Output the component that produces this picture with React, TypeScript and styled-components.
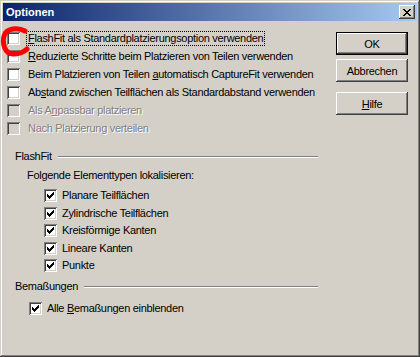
import React from 'react'
import styled, { createGlobalStyle } from 'styled-components'

const GlobalStyle = createGlobalStyle`
  body {
    margin: 0;
    background: #d4d0c8;
    font-family: "Liberation Sans", Arial, sans-serif;
  }
`

const Window = styled.div`
  position: relative;
  width: 420px;
  height: 357px;
  box-sizing: border-box;
  padding: 3px;
  background: #d4d0c8;
  box-shadow: inset -1px -1px #404040, inset 1px 1px #d4d0c8,
    inset -2px -2px #808080, inset 2px 2px #ffffff;
  display: flex;
  flex-direction: column;
  font-size: 11px;
  letter-spacing: -0.3px;
  color: #000;
`

const TitleBar = styled.div`
  height: 18px;
  flex: none;
  display: flex;
  align-items: center;
  justify-content: space-between;
  padding: 0 2px 0 3px;
  background: linear-gradient(to right, #0a246a, #a6caf0);
`

const Title = styled.span`
  color: #fff;
  font-weight: bold;
  font-size: 11px;
  letter-spacing: 0;
`

const CloseButton = styled.div`
  width: 16px;
  height: 14px;
  box-sizing: border-box;
  background: #d4d0c8;
  box-shadow: inset -1px -1px #404040, inset 1px 1px #ffffff,
    inset -2px -2px #808080;
  display: flex;
  align-items: center;
  justify-content: center;
`

const Body = styled.div`
  flex: 1;
  display: grid;
  grid-template-columns: 311px 72px;
  column-gap: 18px;
  align-items: start;
  padding: 8px 9px 0 4px;
`

const Options = styled.div`
  display: flex;
  flex-direction: column;
`

const Row = styled.div<{ $indent?: number; $top?: number; $h?: number }>`
  display: flex;
  align-items: center;
  height: ${(p) => p.$h ?? 18}px;
  margin-left: ${(p) => p.$indent ?? 0}px;
  margin-top: ${(p) => p.$top ?? 0}px;
  white-space: nowrap;
`

const Box = styled.span<{ $disabled?: boolean }>`
  flex: none;
  width: 13px;
  height: 13px;
  display: block;
  background: ${(p) => (p.$disabled ? '#d4d0c8' : '#ffffff')};
  box-shadow: inset 1px 1px #808080, inset -1px -1px #ffffff,
    inset 2px 2px #404040, inset -2px -2px #d4d0c8;

  svg {
    display: block;
  }
`

const Label = styled.span<{ $gap?: number; $focus?: boolean; $disabled?: boolean }>`
  margin-left: ${(p) => p.$gap ?? 6}px;
  padding: 0 1px;
  line-height: 13px;
  border: 1px dotted ${(p) => (p.$focus ? '#000' : 'transparent')};
  color: ${(p) => (p.$disabled ? '#808080' : '#000')};
  text-shadow: ${(p) => (p.$disabled ? '1px 1px 0 #ffffff' : 'none')};

  u {
    text-underline-offset: 1px;
  }
`

const Heading = styled.div<{ $top: number }>`
  display: flex;
  align-items: center;
  height: 14px;
  margin-top: ${(p) => p.$top}px;
  padding-left: 8px;
  gap: 6px;
`

const Etched = styled.div`
  flex: 1;
  height: 0;
  border-top: 1px solid #808080;
  border-bottom: 1px solid #ffffff;
  margin-top: 1px;
`

const Text = styled.span`
  line-height: 13px;
`

const Buttons = styled.div`
  display: flex;
  flex-direction: column;
  margin-top: 3px;
`

const Button = styled.div<{ $default?: boolean; $top?: number }>`
  width: 72px;
  height: 23px;
  box-sizing: border-box;
  margin-top: ${(p) => p.$top ?? 0}px;
  border: ${(p) => (p.$default ? '1px solid #000' : 'none')};
  box-shadow: inset -1px -1px #404040, inset 1px 1px #ffffff,
    inset -2px -2px #808080;
  display: flex;
  align-items: center;
  justify-content: center;
  background: #d4d0c8;

  u {
    text-underline-offset: 1px;
  }
`

const Annotation = styled.svg`
  position: absolute;
  left: 0;
  top: 0;
  pointer-events: none;
`

const checkPath =
  'M3 5H4V6H5V7H6V6H7V5H8V4H9V3H10V6H9V7H8V8H7V9H6V10H5V9H4V8H3Z'

function Check({ checked, disabled }: { checked?: boolean; disabled?: boolean }) {
  return (
    <Box $disabled={disabled}>
      {checked && (
        <svg width="13" height="13" shapeRendering="crispEdges">
          <path d={checkPath} fill="#000" />
        </svg>
      )}
    </Box>
  )
}

const xPixels = ['11000011', '01100110', '00111100', '00011000', '00111100', '01100110', '11000011']

function CloseIcon() {
  return (
    <svg width="8" height="7" shapeRendering="crispEdges">
      {xPixels.map((row, y) =>
        row.split('').map((c, x) => (c === '1' ? <rect key={`${x}-${y}`} x={x} y={y} width="1" height="1" fill="#000" /> : null))
      )}
    </svg>
  )
}

const flashItems = ['Planare Teilflächen', 'Zylindrische Teilflächen', 'Kreisförmige Kanten', 'Lineare Kanten', 'Punkte']

export default function App() {
  return (
    <>
      <GlobalStyle />
      <Window>
        <TitleBar>
          <Title>Optionen</Title>
          <CloseButton>
            <CloseIcon />
          </CloseButton>
        </TitleBar>
        <Body>
          <Options>
            <Row>
              <Check />
              <Label $focus>
                <u>F</u>lashFit als Standardplatzierungsoption verwenden
              </Label>
            </Row>
            <Row>
              <Check />
              <Label>
                <u>R</u>eduzierte Schritte beim Platzieren von Teilen verwenden
              </Label>
            </Row>
            <Row>
              <Check />
              <Label>
                Beim Platzieren von Teilen <u>a</u>utomatisch CaptureFit verwenden
              </Label>
            </Row>
            <Row>
              <Check />
              <Label>
                Ab<u>s</u>tand zwischen Teilflächen als Standardabstand verwenden
              </Label>
            </Row>
            <Row>
              <Check disabled />
              <Label $disabled>
                Als A<u>n</u>passbar platzieren
              </Label>
            </Row>
            <Row>
              <Check disabled />
              <Label $disabled>Nach Platzierung verteilen</Label>
            </Row>

            <Heading $top={12}>
              <Text>FlashFit</Text>
              <Etched />
            </Heading>
            <Row $indent={20} $top={5} $h={14}>
              <Text>Folgende Elementtypen lokalisieren:</Text>
            </Row>
            {flashItems.map((item, i) => (
              <Row key={item} $indent={37} $top={i === 0 ? 5 : 0} $h={17.5}>
                <Check checked />
                <Label $gap={3}>{item}</Label>
              </Row>
            ))}

            <Heading $top={4.5}>
              <Text>Bemaßungen</Text>
              <Etched />
            </Heading>
            <Row $indent={22} $top={6.5}>
              <Check checked />
              <Label $gap={3}>
                Alle <u>B</u>emaßungen einblenden
              </Label>
            </Row>
          </Options>

          <Buttons>
            <Button $default>OK</Button>
            <Button $top={4}>Abbrechen</Button>
            <Button $top={10}>
              <span>
                <u>H</u>ilfe
              </span>
            </Button>
          </Buttons>
        </Body>

        <Annotation width="40" height="60" viewBox="0 0 40 60">
          <path
            d="M25 31 C18 27, 6 28, 4 36 C2 44, 5 54, 13 54 C19 54, 24 52, 27 49"
            fill="none"
            stroke="#ff0000"
            strokeWidth="5"
            strokeLinecap="round"
          />
        </Annotation>
      </Window>
    </>
  )
}
